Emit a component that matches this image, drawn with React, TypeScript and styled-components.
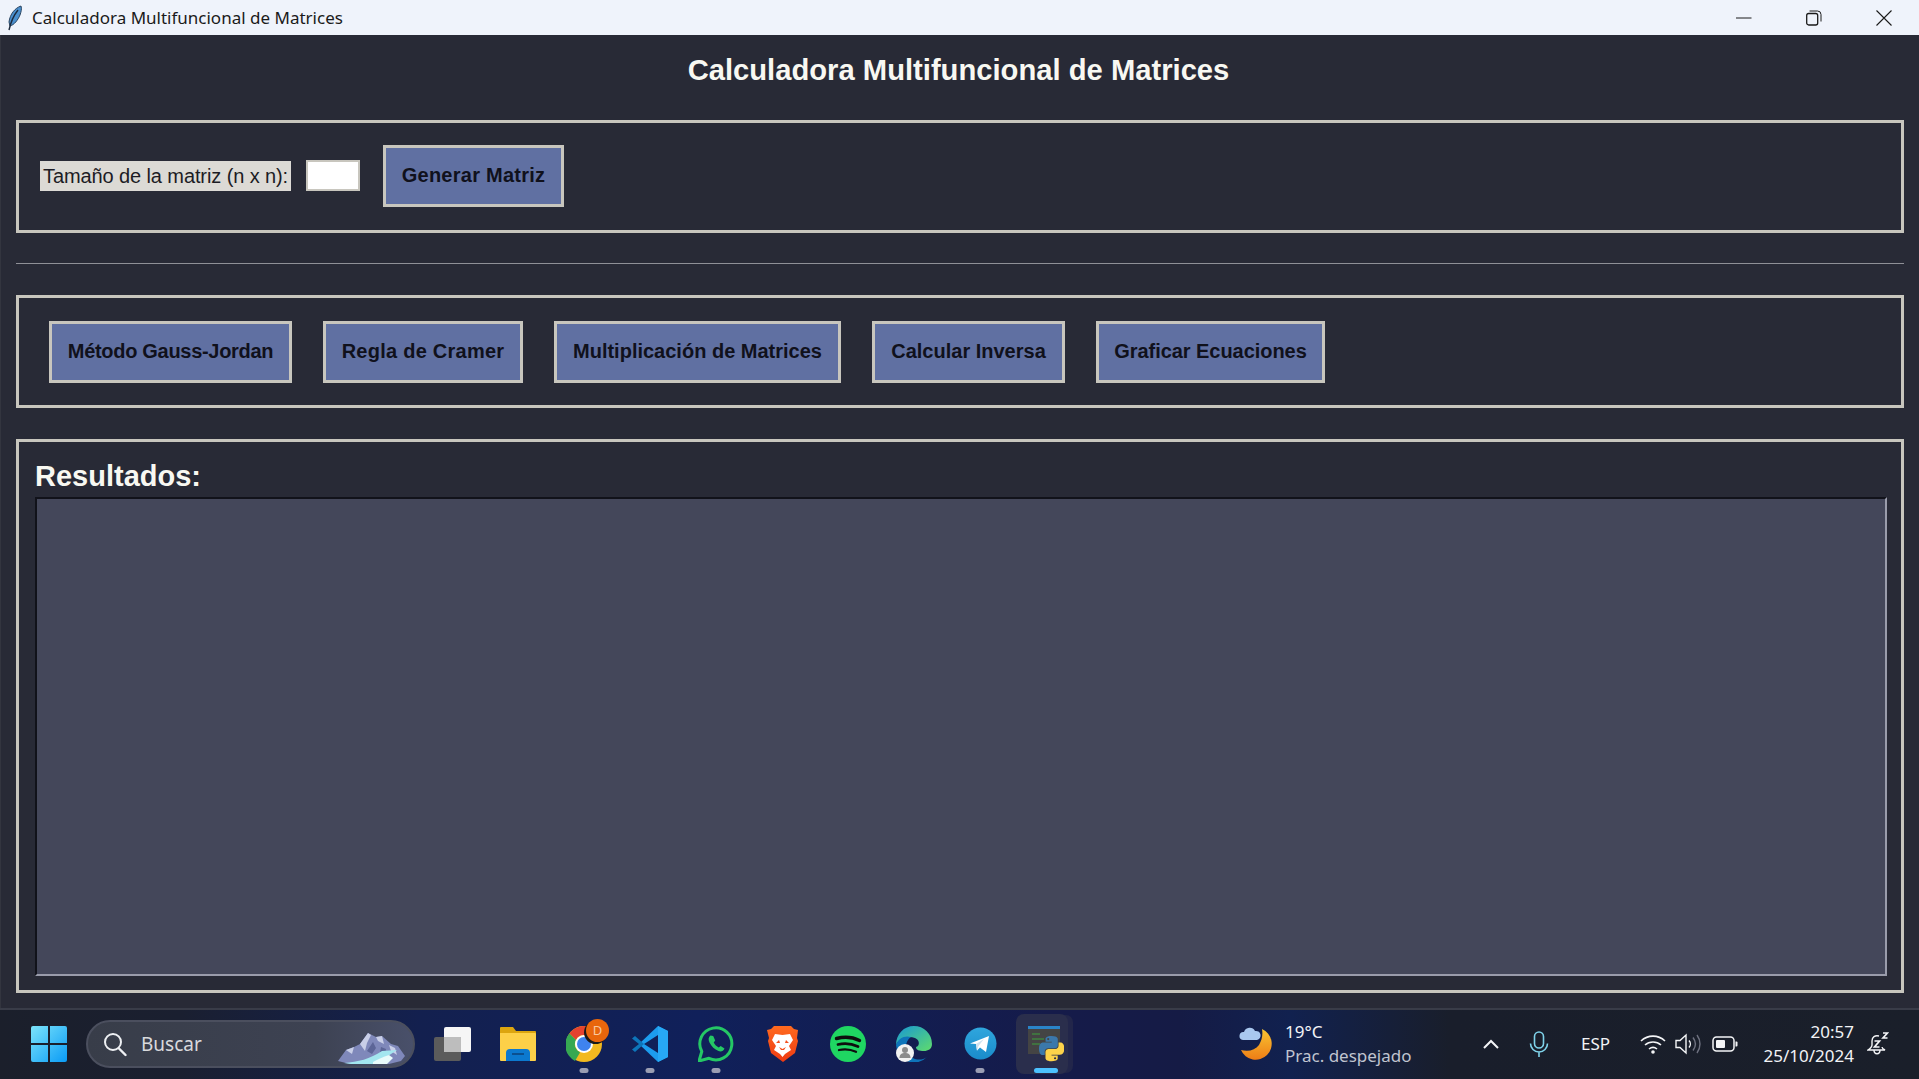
import styled, { createGlobalStyle } from 'styled-components';

const GlobalStyle = createGlobalStyle`
  html, body {
    margin: 0;
    padding: 0;
    overflow: hidden;
    background: #282a36;
  }
  * {
    box-sizing: border-box;
  }
`;

const Screen = styled.div`
  flex-direction: column;
  height: 1079px;
  display: flex;
  width: 1919px;
`;

/* window title bar */

const TitleBar = styled.header`
  font-family: "Noto Sans", sans-serif;
  background: #eff3fb;
  align-items: center;
  font-size: 17px;
  color: #1a1a1a;
  flex: 0 0 35px;
  display: flex;
  padding-left: 6px;
`;

const TitleText = styled.span`
  margin-left: 8px;
  flex: 1;
`;

const WindowControl = styled.span`
  justify-content: center;
  align-items: center;
  display: flex;
  width: 70px;
`;

/* application body */

const Body = styled.main`
  border-left: 1px solid #33353f;
  padding: 0 15px 15px 15px;
  flex-direction: column;
  background: #282a36;
  display: flex;
  flex: 1;
`;

const AppTitle = styled.h1`
  font-family: "Liberation Sans", Arial, sans-serif;
  padding: 0 3px 15px 0;
  justify-content: center;
  align-items: center;
  font-weight: bold;
  font-size: 29.2px;
  color: #f8f8f2;
  flex: 0 0 85px;
  display: flex;
  margin: 0;
`;

const Frame = styled.section<{ $grow?: boolean }>`
  border: 3px solid #c8c6be;
  min-height: 113px;
  ${props => props.$grow && 'flex: 1;'}
`;

const ControlRow = styled.div<{ $gap: number; $inset: number; $height: number }>`
  padding-left: ${props => props.$inset}px;
  height: ${props => props.$height}px;
  gap: ${props => props.$gap}px;
  align-items: center;
  display: flex;
`;

const SizeLabel = styled.label`
  font-family: "Liberation Sans", Arial, sans-serif;
  letter-spacing: -0.1px;
  background: #dcdad5;
  align-items: center;
  padding: 1px 3px 0;
  font-size: 20px;
  color: #1c1c24;
  height: 30px;
  display: flex;
  width: 251px;
  white-space: nowrap;
`;

const SizeInput = styled.input`
  border: 2px solid #c8c6be;
  background: #ffffff;
  height: 31px;
  width: 54px;
  padding: 0;
`;

const ActionButton = styled.button<{ $offset?: number; $width: number; $tracking: number }>`
  font-family: "Liberation Sans", Arial, sans-serif;
  margin-left: ${props => props.$offset || 0}px;
  letter-spacing: ${props => props.$tracking}px;
  width: ${props => props.$width}px;
  border: 3px solid #c8c6be;
  background: #6070a2;
  font-weight: bold;
  font-size: 20px;
  color: #10111c;
  height: 62px;
  padding: 0;
`;

const Divider = styled.hr`
  background: #8f9097;
  margin: 30px 0 31px;
  border: none;
  height: 1px;
`;

const FrameGap = styled.div`
  flex: 0 0 31px;
`;

const ResultsFrame = styled(Frame)`
  padding: 0 14px 14px 16px;
  flex-direction: column;
  display: flex;
`;

const ResultsHeading = styled.h2`
  font-family: "Liberation Sans", Arial, sans-serif;
  align-items: center;
  font-weight: bold;
  font-size: 29px;
  color: #f8f8f2;
  flex: 0 0 55px;
  display: flex;
  margin: 0;
  padding-top: 13px;
`;

const ResultsArea = styled.div`
  border-bottom: 2px solid #9a9cab;
  border-right: 2px solid #9a9cab;
  border-left: 2px solid #11121a;
  border-top: 2px solid #11121a;
  background: #44475a;
  flex: 1;
`;

/* windows taskbar */

const Taskbar = styled.footer`
  background: linear-gradient(90deg, #1b1f2b 0, #1a1f30 180px, #13204f 420px, #10205a 700px, #151b4a 1050px, #151b45 1180px, #11214f 1290px, #191e2b 1450px, #1a1f2a 100%);
  border-top: 2px solid #393c48;
  font-family: "Noto Sans", sans-serif;
  padding-bottom: 2px;
  align-items: center;
  flex: 0 0 71px;
  color: #f2f3f6;
  display: flex;
`;

const StartSlot = styled.div`
  justify-content: center;
  align-items: center;
  display: flex;
  width: 86px;
  padding-left: 11px;
`;

const SearchBox = styled.div`
  background: linear-gradient(90deg, #383d49, #3d4252 70%, #49506a);
  border: 2px solid #4b4f5e;
  border-radius: 24px;
  align-items: center;
  font-size: 19px;
  color: #d9dadd;
  height: 48px;
  display: flex;
  width: 329px;
  padding-left: 15px;
  position: relative;
`;

const SearchLabel = styled.span`
  margin-left: 14px;
`;

const SearchArt = styled.span`
  position: absolute;
  display: flex;
  bottom: 1px;
  right: 6px;
`;

const TaskIcons = styled.div`
  margin-left: 4px;
  display: flex;
`;

const TaskSlot = styled.div`
  justify-content: center;
  align-items: center;
  position: relative;
  display: flex;
  height: 60px;
  width: 66px;
`;

const ActiveTile = styled.span`
  box-shadow: 6px 0 0 -1px #22264a;
  background: #2a2e4c;
  border-radius: 8px;
  position: absolute;
  height: 60px;
  width: 52px;
  left: 3px;
  top: 0;
`;

const IconLayer = styled.span`
  position: relative;
  display: flex;
`;

const RunDot = styled.span<{ $active?: boolean }>`
  background: ${props => (props.$active ? '#4cc2ff' : '#9a9db3')};
  width: ${props => (props.$active ? '24px' : '9px')};
  transform: translateX(-50%);
  border-radius: 3px;
  position: absolute;
  height: 5px;
  bottom: 1px;
  left: 50%;
`;

const Badge = styled.span`
  font-family: "Noto Sans", sans-serif;
  justify-content: center;
  background: #e8660c;
  align-items: center;
  border-radius: 50%;
  position: absolute;
  font-size: 13px;
  color: #f9c9a0;
  height: 23px;
  display: flex;
  width: 23px;
  right: 8px;
  top: 5px;
  box-shadow: -2px 2px 0 #1a1a1a;
`;

const Weather = styled.div`
  margin-left: 159px;
  align-items: center;
  display: flex;
`;

const WeatherText = styled.div`
  flex-direction: column;
  margin-left: 11px;
  line-height: 24px;
  font-size: 17px;
  display: flex;
`;

const WeatherDetail = styled.span`
  color: #c0c4cf;
`;

const Tray = styled.div`
  padding-right: 17px;
  align-items: center;
  margin-left: auto;
  font-size: 17px;
  display: flex;
  height: 100%;
`;

const TraySlot = styled.span<{ $width: number }>`
  width: ${props => props.$width}px;
  justify-content: center;
  align-items: center;
  display: flex;
`;

const Clock = styled.div`
  flex-direction: column;
  margin-left: 20px;
  text-align: right;
  line-height: 24px;
  font-size: 17px;
  display: flex;
`;

const Feather = () => (
  <svg width="18" height="26" viewBox="0 0 18 26">
    <path d="M15 1C9 3 4 9 3 17l1 4c4-1 8-6 10-11 1-3 2-6 1-9z" fill="#4a8fce" stroke="#2a4460" />
    <path d="M12 5C8 10 5 16 3 25" fill="none" stroke="#1d2a3c" strokeWidth="1.4" />
  </svg>
);

const MinimizeGlyph = () => (
  <svg width="16" height="16" viewBox="0 0 16 16">
    <path d="M0 8h15.5" stroke="#1a1a1a" fill="none" />
  </svg>
);

const RestoreGlyph = () => (
  <svg width="16" height="16" viewBox="0 0 16 16" fill="none" stroke="#1a1a1a">
    <rect x="0.700" y="3.500" width="11" height="11.500" rx="2" strokeWidth="1.300" />
    <path d="M3.500 1h8a3.500 3.500 0 0 1 3.500 3.500v7" strokeWidth="1" />
  </svg>
);

const CloseGlyph = () => (
  <svg width="16" height="16" viewBox="0 0 16 16">
    <path d="M.5.5l15 15M15.500.5l-15 15" stroke="#1a1a1a" fill="none" strokeWidth="1.100" />
  </svg>
);

const StartLogo = () => (
  <svg width="36" height="36" viewBox="0 0 36 36">
    <defs>
      <linearGradient id="winLogo" x1="0" y1="0" x2="1" y2="1">
        <stop offset="0" stopColor="#7ce4fb" />
        <stop offset="1" stopColor="#0a9bf5" />
      </linearGradient>
    </defs>
    <path d="M2 0h15v17H0V2a2 2 0 0 1 2-2zM19 0h15a2 2 0 0 1 2 2v15H19zM0 19h17v17H2a2 2 0 0 1-2-2zM19 19h17v15a2 2 0 0 1-2 2H19z" fill="url(#winLogo)" />
  </svg>
);

const SearchGlyph = () => (
  <svg width="24" height="26" viewBox="0 0 24 26" fill="none" stroke="#eef0f3" strokeWidth="2">
    <circle cx="10" cy="11" r="8" />
    <path d="M16 17.500l6.500 6.500" strokeLinecap="round" strokeWidth="2.400" />
  </svg>
);

const MountainArt = () => (
  <svg width="70" height="34" viewBox="0 0 70 34">
    <path d="M1 30L9 19l8-3 6-3 8-11 8 4 6-1 9 8 7 2 7 10-4 5-12 3H13z" fill="#7f88ba" />
    <path d="M23 13l8-11 3 2-4 8-2 8zM39 6l6-1 2 8-6-3zM9 19l8-3-2 7zM52 14l6 3 2 7-6-4z" fill="#c9cfe8" />
    <path d="M30 20l6-9 3 6-4 6zM44 16l5 2-1 6-5-2z" fill="#5c6597" />
    <path d="M7 32c14-1 26-4 38-12l15-1-9 6-9 8H14z" fill="#a3e6ef" />
    <path d="M36 31c5-3 10-5 16-7l4 3-6 6H36z" fill="#e9fbfb" />
  </svg>
);

const TaskViewIcon = () => (
  <svg width="37" height="34" viewBox="0 0 37 34">
    <rect x="0" y="10" width="27" height="24" rx="2" fill="#5b5b5b" />
    <rect x="10" y="0" width="27" height="25" rx="2" fill="#f6f6f6" />
    <rect x="10" y="10" width="17" height="15" fill="#bdbdbd" />
  </svg>
);

const FolderIcon = () => (
  <svg width="36" height="34" viewBox="0 0 36 34">
    <path d="M1 0h12l3 4h19a1 1 0 0 1 1 1v4H0V1a1 1 0 0 1 1-1z" fill="#dca50f" />
    <path d="M0 6h35a1 1 0 0 1 1 1v26a1 1 0 0 1-1 1H1a1 1 0 0 1-1-1z" fill="#fdd048" />
    <path d="M6 34V26a4 4 0 0 1 4-4h16a4 4 0 0 1 4 4v8z" fill="#0c79cf" />
    <rect x="12" y="26" width="12" height="2" fill="#0b4f8f" />
  </svg>
);

const ChromeIcon = () => (
  <svg width="36" height="36" viewBox="0 0 36 36">
    <circle cx="18" cy="18" r="18" fill="#f2b91f" />
    <path d="M18 0a18 18 0 0 1 15.600 9H18a9 9 0 0 0-8 5L3.400 7.500A18 18 0 0 1 18 0z" fill="#e5422f" />
    <path d="M3.400 7.500L10 14a9 9 0 0 0 4 12.500L9 35A18 18 0 0 1 3.400 7.500z" fill="#36a852" />
    <circle cx="18" cy="18" r="9" fill="#fff" />
    <circle cx="18" cy="18" r="7" fill="#3f83ee" />
  </svg>
);

const VsCodeIcon = () => (
  <svg width="36" height="36" viewBox="0 0 36 36">
    <path d="M26 0l10 5v26l-10 5L8 19V17z" fill="#1c9cee" />
    <path d="M26 0v36l10-5V5z" fill="#27a8f5" />
    <path d="M26 9v18L12 18z" fill="#102058" />
    <path d="M3 10l-3 2.500L7 18l-7 5.500L3 26l9-8zM3 10l9 8" fill="#0d75ba" />
  </svg>
);

const WhatsAppIcon = () => (
  <svg width="36" height="36" viewBox="0 0 36 36">
    <path d="M1 35l2.800-9.500A16 16 0 1 1 11 32.300z" fill="none" stroke="#25c765" strokeWidth="3" strokeLinejoin="round" />
    <path d="M12.500 9.500c-2 1.500-2.500 4-1 7 2 4 5 7 9 8.500 2.500 1 5 0 6-2.500l-3.800-2.500-2 1.500c-2-1-4-3-5-5l1.500-2-2-4.500z" fill="#25c765" />
  </svg>
);

const BraveIcon = () => (
  <svg width="31" height="36" viewBox="0 0 31 36">
    <defs>
      <linearGradient id="braveFill" x1="0" y1="0" x2="0" y2="1">
        <stop offset="0" stopColor="#ff6a1f" />
        <stop offset="1" stopColor="#ee3a12" />
      </linearGradient>
    </defs>
    <path d="M7 0h17l3 3 4 1-1 8 1 3-3 12-8 6-4 3-4-3-8-6L1 15l1-3-2-8 4-1z" fill="url(#braveFill)" />
    <path d="M8 8l7.500 1L23 8l3 6-4 6 2 4-6 4-2.500 3-2.500-3-6-4 2-4-4-6z" fill="#fff" />
    <path d="M13 17h-4l3-3zM18 17h4l-3-3zM12 21l3.500 2 3.500-2-2 3h-3z" fill="#f4501c" />
  </svg>
);

const SpotifyIcon = () => (
  <svg width="36" height="36" viewBox="0 0 36 36">
    <circle cx="18" cy="18" r="18" fill="#1fd662" />
    <path d="M6.500 12.500c8-2 16-1.500 23 2" fill="none" stroke="#0e0e0e" strokeWidth="3.400" strokeLinecap="round" />
    <path d="M8 18.500c7-1.800 13.500-1 20 2" fill="none" stroke="#0e0e0e" strokeWidth="2.800" strokeLinecap="round" />
    <path d="M9 24c6-1.400 11.500-.8 17 1.800" fill="none" stroke="#0e0e0e" strokeWidth="2.300" strokeLinecap="round" />
  </svg>
);

const EdgeIcon = () => (
  <svg width="36" height="36" viewBox="0 0 36 36">
    <defs>
      <linearGradient id="edgeTop" x1="0" y1="0" x2="1" y2="1">
        <stop offset="0" stopColor="#1897d5" />
        <stop offset="1" stopColor="#5fdc6c" />
      </linearGradient>
    </defs>
    <path d="M18 0a18 18 0 0 1 18 18c0 5-4 7-8 7-5 0-8-1-8-4 4-1 4-7-1-9C11 9 3 13 0 19 0 8 8 0 18 0z" fill="url(#edgeTop)" />
    <path d="M0 19c2-7 9-10 15-8-5 3-7 11-3 17 4 5 12 8 19 3a18 18 0 0 1-31-12z" fill="#0e74ba" />
    <circle cx="9" cy="27" r="9" fill="#f2f2f2" />
    <circle cx="9" cy="24" r="3" fill="#8b8b8b" />
    <path d="M3.500 32c0-4 2.500-5 5.500-5s5.500 1 5.500 5z" fill="#8b8b8b" />
  </svg>
);

const TelegramIcon = () => (
  <svg width="33" height="33" viewBox="0 0 33 33">
    <defs>
      <linearGradient id="tgBack" x1="0" y1="0" x2="0" y2="1">
        <stop offset="0" stopColor="#2fa6dd" />
        <stop offset="1" stopColor="#1a8ccb" />
      </linearGradient>
    </defs>
    <circle cx="16.500" cy="16.500" r="16" fill="url(#tgBack)" />
    <path d="M6 16.500L25 9l-3 16-6-4.500-3 3-1-6.500z" fill="#fff" />
    <path d="M12 17l8-5-5.500 7-1.500 5z" fill="#cfe3f0" />
  </svg>
);

const PythonIcon = () => (
  <svg width="36" height="36" viewBox="0 0 36 36">
    <rect x="0" y="0" width="32" height="28" fill="#444" />
    <rect x="0" y="0" width="32" height="3" fill="#2a84c9" />
    <path d="M4 8h8M4 13h12M4 18h8" stroke="#3c9f3c" strokeWidth="1.200" />
    <g transform="translate(11 10) scale(.23)">
      <path d="M54.900 0C26.800 0 28.600 12.200 28.600 12.200v12.600h26.800v3.800H17.900S0 26.600 0 54.900c0 28.300 15.600 27.300 15.600 27.300h9.300V69s-.5-15.600 15.400-15.600h26.600s14.900.2 14.900-14.400V14.900S84.100 0 54.900 0zM40.100 8.500a4.800 4.800 0 1 1 0 9.600 4.800 4.800 0 0 1 0-9.600z" fill="#3b78ab" />
      <path d="M54.900 0C26.800 0 28.600 12.200 28.600 12.200v12.600h26.800v3.800H17.900S0 26.600 0 54.900c0 28.300 15.600 27.300 15.600 27.300h9.300V69s-.5-15.600 15.400-15.600h26.600s14.900.2 14.900-14.400V14.900S84.100 0 54.900 0zM40.100 8.500a4.800 4.800 0 1 1 0 9.600 4.800 4.800 0 0 1 0-9.600z" fill="#fdd34a" transform="rotate(180 55 55)" />
    </g>
  </svg>
);

const WeatherIcon = () => (
  <svg width="36" height="36" viewBox="0 0 36 36">
    <defs>
      <linearGradient id="moonFill" x1="0" y1="0" x2="0" y2="1">
        <stop offset="0" stopColor="#f8c532" />
        <stop offset="1" stopColor="#ee7d16" />
      </linearGradient>
    </defs>
    <path d="M24 3a16 16 0 1 1-21 21c8 2 14 0 18-5 3-5 4-10 3-16z" fill="url(#moonFill)" />
    <path d="M5 14a4 4 0 0 1 1-8 6 6 0 0 1 11-1 4.500 4.500 0 0 1 2 9z" fill="#a9c8ef" />
  </svg>
);

const ChevronGlyph = () => (
  <svg width="18" height="12" viewBox="0 0 18 12">
    <path d="M2 10l7-7 7 7" fill="none" stroke="#f4f5f7" strokeWidth="2" />
  </svg>
);

const MicGlyph = () => (
  <svg width="20" height="26" viewBox="0 0 20 26" fill="none" stroke="#7fd3ea" strokeWidth="1.600">
    <rect x="5.500" y="1" width="9" height="16" rx="4.500" />
    <path d="M1.500 12.500a8.500 8.500 0 0 0 17 0M10 21v5" />
  </svg>
);

const WifiGlyph = () => (
  <svg width="26" height="20" viewBox="0 0 26 20" fill="none" stroke="#f4f5f7" strokeWidth="1.600">
    <path d="M1 7c7-6.500 17-6.500 24 0M5 11c4.500-4 11.500-4 16 0M9 15c2.500-2 5.500-2 8 0" />
    <circle cx="13" cy="18" r="1.800" fill="#f4f5f7" stroke="none" />
  </svg>
);

const VolumeGlyph = () => (
  <svg width="26" height="22" viewBox="0 0 26 22" fill="none" stroke="#f4f5f7" strokeWidth="1.400">
    <path d="M1 7.500h4L11 2v18l-6-5.500H1z" />
    <path d="M14 7.500c1.800 2 1.800 5 0 7" />
    <path d="M18 4.500c3 4 3 9 0 13M22 2c4 5.500 4 12.500 0 18" stroke="#6f7280" />
  </svg>
);

const BatteryGlyph = () => (
  <svg width="26" height="16" viewBox="0 0 26 16">
    <rect x="1" y="1" width="21" height="14" rx="3.500" fill="none" stroke="#f4f5f7" strokeWidth="1.500" />
    <rect x="4" y="4" width="9" height="8" rx="1" fill="#f4f5f7" />
    <path d="M23.500 5.500h1a1 1 0 0 1 1 1v3a1 1 0 0 1-1 1h-1z" fill="#f4f5f7" />
  </svg>
);

const BellGlyph = () => (
  <svg width="22" height="24" viewBox="0 0 22 24" fill="none" stroke="#f4f5f7" strokeWidth="1.400">
    <path d="M12 4c-4-1-7 1-7 5v4c0 2-1 3-4 5h17c-2-1-3-2-3-3" />
    <path d="M7 18c0 5 6 5 6 0" />
    <path d="M7.500 9h5l-5 6h5M16 1h4.500L16 6h4.500" strokeWidth="1.700" />
  </svg>
);

const actions = [
  { label: 'Método Gauss-Jordan', width: 243, tracking: -0.3 },
  { label: 'Regla de Cramer', width: 200, tracking: 0.25 },
  { label: 'Multiplicación de Matrices', width: 287, tracking: 0 },
  { label: 'Calcular Inversa', width: 193, tracking: 0 },
  { label: 'Graficar Ecuaciones', width: 229, tracking: -0.05 }
];

const App = (): JSX.Element => (
  <Screen>
    <GlobalStyle />
    <TitleBar>
      <Feather />
      <TitleText>Calculadora Multifuncional de Matrices</TitleText>
      <WindowControl><MinimizeGlyph /></WindowControl>
      <WindowControl><RestoreGlyph /></WindowControl>
      <WindowControl><CloseGlyph /></WindowControl>
    </TitleBar>
    <Body>
      <AppTitle>Calculadora Multifuncional de Matrices</AppTitle>
      <Frame>
        <ControlRow $gap={15} $inset={21} $height={105}>
          <SizeLabel>Tamaño de la matriz (n x n):</SizeLabel>
          <SizeInput />
          <ActionButton $offset={8} $width={181} $tracking={0.25}>Generar Matriz</ActionButton>
        </ControlRow>
      </Frame>
      <Divider />
      <Frame>
        <ControlRow $gap={31} $inset={30} $height={107}>
          {actions.map(action => (
            <ActionButton key={action.label} $width={action.width} $tracking={action.tracking}>
              {action.label}
            </ActionButton>
          ))}
        </ControlRow>
      </Frame>
      <FrameGap />
      <ResultsFrame $grow>
        <ResultsHeading>Resultados:</ResultsHeading>
        <ResultsArea />
      </ResultsFrame>
    </Body>
    <Taskbar>
      <StartSlot><StartLogo /></StartSlot>
      <SearchBox>
        <SearchGlyph />
        <SearchLabel>Buscar</SearchLabel>
        <SearchArt><MountainArt /></SearchArt>
      </SearchBox>
      <TaskIcons>
        <TaskSlot><TaskViewIcon /></TaskSlot>
        <TaskSlot><FolderIcon /></TaskSlot>
        <TaskSlot>
          <ChromeIcon />
          <Badge>D</Badge>
          <RunDot />
        </TaskSlot>
        <TaskSlot><VsCodeIcon /><RunDot /></TaskSlot>
        <TaskSlot><WhatsAppIcon /><RunDot /></TaskSlot>
        <TaskSlot><BraveIcon /></TaskSlot>
        <TaskSlot><SpotifyIcon /></TaskSlot>
        <TaskSlot><EdgeIcon /></TaskSlot>
        <TaskSlot><TelegramIcon /><RunDot /></TaskSlot>
        <TaskSlot>
          <ActiveTile />
          <IconLayer><PythonIcon /></IconLayer>
          <RunDot $active />
        </TaskSlot>
      </TaskIcons>
      <Weather>
        <WeatherIcon />
        <WeatherText>
          <span>19°C</span>
          <WeatherDetail>Prac. despejado</WeatherDetail>
        </WeatherText>
      </Weather>
      <Tray>
        <TraySlot $width={62}><ChevronGlyph /></TraySlot>
        <TraySlot $width={34}><MicGlyph /></TraySlot>
        <TraySlot $width={80}>ESP</TraySlot>
        <TraySlot $width={34}><WifiGlyph /></TraySlot>
        <TraySlot $width={36}><VolumeGlyph /></TraySlot>
        <TraySlot $width={38}><BatteryGlyph /></TraySlot>
        <Clock>
          <span>20:57</span>
          <span>25/10/2024</span>
        </Clock>
        <TraySlot $width={48}><BellGlyph /></TraySlot>
      </Tray>
    </Taskbar>
  </Screen>
);

export default App;
